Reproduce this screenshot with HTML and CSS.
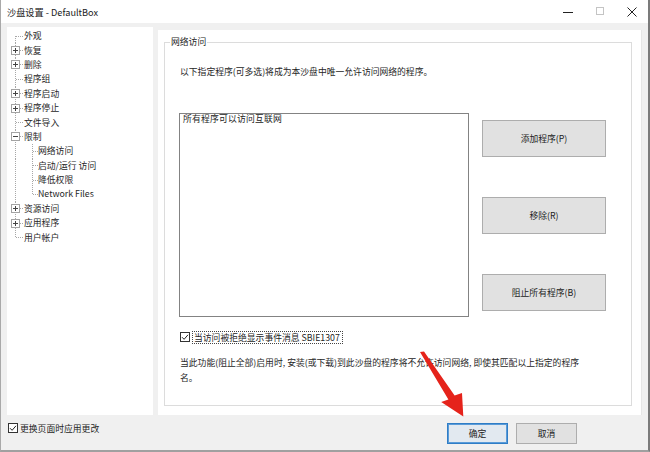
FILE: index.html
```html
<!DOCTYPE html>
<html lang="zh-CN">
<head>
<meta charset="utf-8">
<title>沙盘设置 - DefaultBox</title>
<link rel="stylesheet" href="styles.css">
</head>
<body>
<div class="window">
  <div class="titlebar">
    <span class="title">沙盘设置 - DefaultBox</span>
    <div class="caption">
      <span class="cbtn"><svg width="10" height="10" viewBox="0 0 10 10"><line x1="0" y1="5.5" x2="10" y2="5.5" stroke="#222" stroke-width="1"/></svg></span>
      <span class="cbtn"><svg width="9" height="9" viewBox="0 0 9 9"><rect x="0.5" y="0.5" width="7" height="7" fill="none" stroke="#c4c4c4" stroke-width="1"/></svg></span>
      <span class="cbtn"><svg width="10" height="10" viewBox="0 0 10 10"><path d="M0.5 0.5L9.5 9.5M9.5 0.5L0.5 9.5" stroke="#222" stroke-width="1" fill="none"/></svg></span>
    </div>
  </div>

  <div class="main">
    <div class="tree">
      <div class="node first"><span class="g"></span><span class="t">外观</span></div>
      <div class="node"><span class="g"><i class="box plus"></i></span><span class="t">恢复</span></div>
      <div class="node"><span class="g"><i class="box plus"></i></span><span class="t">删除</span></div>
      <div class="node"><span class="g"></span><span class="t">程序组</span></div>
      <div class="node"><span class="g"><i class="box plus"></i></span><span class="t">程序启动</span></div>
      <div class="node"><span class="g"><i class="box plus"></i></span><span class="t">程序停止</span></div>
      <div class="node"><span class="g"></span><span class="t">文件导入</span></div>
      <div class="node"><span class="g"><i class="box minus"></i></span><span class="t">限制</span></div>
      <div class="node child"><span class="g2"></span><span class="t">网络访问</span></div>
      <div class="node child"><span class="g2"></span><span class="t">启动/运行 访问</span></div>
      <div class="node child"><span class="g2"></span><span class="t">降低权限</span></div>
      <div class="node child lastchild"><span class="g2"></span><span class="t">Network Files</span></div>
      <div class="node"><span class="g"><i class="box plus"></i></span><span class="t">资源访问</span></div>
      <div class="node"><span class="g"><i class="box plus"></i></span><span class="t">应用程序</span></div>
      <div class="node last"><span class="g"></span><span class="t">用户帐户</span></div>
    </div>

    <div class="page">
      <fieldset class="group">
        <legend>网络访问</legend>
        <div class="group-body">
          <p class="intro">以下指定程序(可多选)将成为本沙盘中唯一允许访问网络的程序。</p>
          <div class="list-row">
            <div class="listbox">所有程序可以访问互联网</div>
            <div class="btn-col">
              <button class="btn big">添加程序(P)</button>
              <button class="btn big">移除(R)</button>
              <button class="btn big">阻止所有程序(B)</button>
            </div>
          </div>
          <div class="check-row">
            <svg class="cb" width="10" height="10" viewBox="0 0 10 10"><rect x="0.5" y="0.5" width="9" height="9" fill="#fff" stroke="#333"/><path d="M2 5.2L4.1 7.3L8 2.8" fill="none" stroke="#222" stroke-width="1"/></svg>
            <span class="focus">当访问被拒绝显示事件消息 SBIE1307</span>
          </div>
          <p class="desc">当此功能(阻止全部)启用时, 安装(或下载)到此沙盘的程序将不允许访问网络, 即使其匹配以上指定的程序名。</p>
        </div>
      </fieldset>
    </div>
  </div>

  <div class="bottom">
    <div class="check-row apply">
      <svg class="cb" width="10" height="10" viewBox="0 0 10 10"><rect x="0.5" y="0.5" width="9" height="9" fill="#fff" stroke="#333"/><path d="M2 5.2L4.1 7.3L8 2.8" fill="none" stroke="#222" stroke-width="1"/></svg>
      <span>更换页面时应用更改</span>
    </div>
    <div class="dlg-btns">
      <button class="btn dlg ok">确定</button>
      <button class="btn dlg">取消</button>
    </div>
  </div>

  <svg class="arrow" width="650" height="452" viewBox="0 0 650 452">
    <polygon points="420,352 424,351.5 454.6,395.6 462,393 463.3,416.5 441.2,402 448.4,399.6" fill="#e5231b"/>
  </svg>
</div>
</body>
</html>
```

FILE: styles.css
```css
* { box-sizing: border-box; }

html, body {
  margin: 0;
  padding: 0;
}

body {
  font-family: "Noto Sans CJK SC", "Noto Sans", sans-serif;
  font-size: 8.8px;
  color: #262626;
  background: #f0f0f0;
}

.window {
  position: relative;
  width: 650px;
  height: 452px;
  display: flex;
  flex-direction: column;
  background: #f0f0f0;
  border-left: 1px solid #a9a9a9;
  border-right: 2px solid #7b7b7b;
  border-bottom: 2px solid #a0a0a0;
  overflow: hidden;
}

/* title bar */
.titlebar {
  height: 23px;
  flex: none;
  background: #fff;
  display: flex;
  align-items: center;
  padding-left: 6px;
}

.title {
  font-size: 9.2px;
  line-height: 12px;
  color: #1a1a1a;
}

.caption {
  margin-left: auto;
  display: flex;
}

.cbtn {
  width: 32px;
  height: 23px;
  display: flex;
  align-items: center;
  justify-content: center;
}

/* main area */
.main {
  height: 392px;
  flex: none;
  display: flex;
  gap: 5px;
  padding: 4px 6px 0 6px;
}

.tree {
  width: 146px;
  background: #fff;
  padding-top: 2px;
}

.node {
  height: 14.4px;
  display: flex;
  align-items: center;
  line-height: 12px;
}

.g, .g2 {
  height: 100%;
  flex: none;
  display: flex;
  align-items: center;
  background-repeat: no-repeat;
}

.g {
  width: 17px;
  background-image:
    repeating-linear-gradient(to bottom, #a8a8a8 0 1px, transparent 1px 2px),
    repeating-linear-gradient(to right, #a8a8a8 0 1px, transparent 1px 2px);
  background-size: 1px 100%, 7px 1px;
  background-position: 8px 0, 9px 50%;
}

.first .g {
  background-size: 1px 50%, 7px 1px;
  background-position: 8px 100%, 9px 50%;
}

.last .g {
  background-size: 1px 50%, 7px 1px;
  background-position: 8px 0, 9px 50%;
}

.g2 {
  width: 31px;
  background-image:
    repeating-linear-gradient(to bottom, #a8a8a8 0 1px, transparent 1px 2px),
    repeating-linear-gradient(to bottom, #a8a8a8 0 1px, transparent 1px 2px),
    repeating-linear-gradient(to right, #a8a8a8 0 1px, transparent 1px 2px);
  background-size: 1px 100%, 1px 100%, 5px 1px;
  background-position: 8px 0, 25px 0, 26px 50%;
}

.lastchild .g2 {
  background-size: 1px 100%, 1px 50%, 5px 1px;
}

.box {
  display: block;
  width: 9px;
  height: 9px;
  margin-left: 4px;
  border: 1px solid #a3a3a3;
  background-color: #fff;
  background-repeat: no-repeat;
  background-position: center;
}

.box.plus {
  background-image:
    linear-gradient(#444, #444),
    linear-gradient(#444, #444);
  background-size: 5px 1px, 1px 5px;
}

.box.minus {
  background-image: linear-gradient(#444, #444);
  background-size: 5px 1px;
}

.t {
  white-space: nowrap;
}

/* property page */
.page {
  flex: 1;
  margin-top: 3px;
  background: #fff;
  display: flex;
  flex-direction: column;
  padding: 6px 9px 9px 6px;
  border-right: 1px solid #e6e6e6;
}

.group {
  flex: 1;
  margin: 0;
  padding: 0;
  min-width: 0;
  border: 1px solid #dcdcdc;
}

.group legend {
  margin-left: 5px;
  padding: 0 1px;
  line-height: 12px;
  font-size: 8.8px;
}

.group-body {
  padding-left: 14px;
}

.intro {
  margin: 17px 0 0 1px;
  line-height: 14px;
}

.list-row {
  display: flex;
  margin-top: 34px;
}

.listbox {
  width: 290px;
  height: 204px;
  border: 1px solid #838383;
  padding: 0 3px;
  font-size: 8.8px;
  line-height: 10px;
  letter-spacing: 0.2px;
  color: #222;
}

.btn-col {
  margin-left: 13px;
  padding-top: 7px;
  display: flex;
  flex-direction: column;
  gap: 40px;
}

.btn {
  font: inherit;
  color: #222;
  background: #e1e1e1;
  border: 1px solid #adadad;
  padding: 0;
  margin: 0;
}

.btn.big {
  width: 124px;
  height: 37px;
}

.check-row {
  display: flex;
  align-items: center;
  height: 14px;
  margin-top: 13px;
}

.cb {
  flex: none;
  margin-left: 1px;
}

.focus {
  margin-left: 2px;
  border: 1px dotted #444;
  padding: 0 2px 0 1px;
  line-height: 11px;
}

.desc {
  width: 408px;
  margin: 11px 0 0 1px;
  line-height: 15px;
}

/* bottom bar */
.bottom {
  flex: 1;
  display: flex;
  align-items: flex-start;
  padding: 0 0 0 6px;
}

.check-row.apply {
  margin-top: 6px;
  height: 14px;
}

.check-row.apply span {
  margin-left: 2px;
}

.dlg-btns {
  margin-left: auto;
  margin-right: 71px;
  padding-top: 8px;
  display: flex;
  gap: 8px;
}

.btn.dlg {
  width: 61px;
  height: 21px;
}

.btn.ok {
  background: #e2e9f0;
  border-color: #2f7dc6;
  box-shadow: inset 0 0 0 1px #5a9bd8;
}

.arrow {
  position: absolute;
  left: -1px;
  top: 0;
  pointer-events: none;
}
```
